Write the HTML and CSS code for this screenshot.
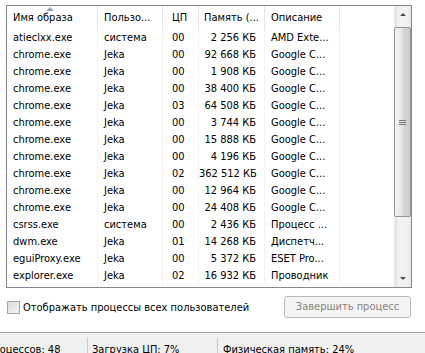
FILE: index.html
```html
<!DOCTYPE html>
<html>
<head>
<meta charset="utf-8">
<link rel="stylesheet" href="styles.css">
</head>
<body>
<div class="page">
  <div class="list">
    <div class="table">
      <div class="head">
        <div class="hcell c1">Имя образа<span class="sort"></span></div>
        <div class="hcell c2">Пользо...</div>
        <div class="hcell c3">ЦП</div>
        <div class="hcell c4">Память (...</div>
        <div class="hcell c5">Описание</div>
        <div class="hcell c6"></div>
      </div>
      <div class="row"><div class="cell c1">atieclxx.exe</div><div class="cell c2">система</div><div class="cell c3">00</div><div class="cell c4">2 256 КБ</div><div class="cell c5">AMD Exte...</div><div class="cell c6"></div></div>
      <div class="row"><div class="cell c1">chrome.exe</div><div class="cell c2">Jeka</div><div class="cell c3">00</div><div class="cell c4">92 668 КБ</div><div class="cell c5">Google C...</div><div class="cell c6"></div></div>
      <div class="row"><div class="cell c1">chrome.exe</div><div class="cell c2">Jeka</div><div class="cell c3">00</div><div class="cell c4">1 908 КБ</div><div class="cell c5">Google C...</div><div class="cell c6"></div></div>
      <div class="row"><div class="cell c1">chrome.exe</div><div class="cell c2">Jeka</div><div class="cell c3">00</div><div class="cell c4">38 400 КБ</div><div class="cell c5">Google C...</div><div class="cell c6"></div></div>
      <div class="row"><div class="cell c1">chrome.exe</div><div class="cell c2">Jeka</div><div class="cell c3">03</div><div class="cell c4">64 508 КБ</div><div class="cell c5">Google C...</div><div class="cell c6"></div></div>
      <div class="row"><div class="cell c1">chrome.exe</div><div class="cell c2">Jeka</div><div class="cell c3">00</div><div class="cell c4">3 744 КБ</div><div class="cell c5">Google C...</div><div class="cell c6"></div></div>
      <div class="row"><div class="cell c1">chrome.exe</div><div class="cell c2">Jeka</div><div class="cell c3">00</div><div class="cell c4">15 888 КБ</div><div class="cell c5">Google C...</div><div class="cell c6"></div></div>
      <div class="row"><div class="cell c1">chrome.exe</div><div class="cell c2">Jeka</div><div class="cell c3">00</div><div class="cell c4">4 196 КБ</div><div class="cell c5">Google C...</div><div class="cell c6"></div></div>
      <div class="row"><div class="cell c1">chrome.exe</div><div class="cell c2">Jeka</div><div class="cell c3">02</div><div class="cell c4">362 512 КБ</div><div class="cell c5">Google C...</div><div class="cell c6"></div></div>
      <div class="row"><div class="cell c1">chrome.exe</div><div class="cell c2">Jeka</div><div class="cell c3">00</div><div class="cell c4">12 964 КБ</div><div class="cell c5">Google C...</div><div class="cell c6"></div></div>
      <div class="row"><div class="cell c1">chrome.exe</div><div class="cell c2">Jeka</div><div class="cell c3">00</div><div class="cell c4">24 408 КБ</div><div class="cell c5">Google C...</div><div class="cell c6"></div></div>
      <div class="row"><div class="cell c1">csrss.exe</div><div class="cell c2">система</div><div class="cell c3">00</div><div class="cell c4">2 436 КБ</div><div class="cell c5">Процесс ...</div><div class="cell c6"></div></div>
      <div class="row"><div class="cell c1">dwm.exe</div><div class="cell c2">Jeka</div><div class="cell c3">01</div><div class="cell c4">14 268 КБ</div><div class="cell c5">Диспетч...</div><div class="cell c6"></div></div>
      <div class="row"><div class="cell c1">eguiProxy.exe</div><div class="cell c2">Jeka</div><div class="cell c3">00</div><div class="cell c4">5 372 КБ</div><div class="cell c5">ESET Pro...</div><div class="cell c6"></div></div>
      <div class="row"><div class="cell c1">explorer.exe</div><div class="cell c2">Jeka</div><div class="cell c3">02</div><div class="cell c4">16 932 КБ</div><div class="cell c5">Проводник</div><div class="cell c6"></div></div>
    </div>
    <div class="scrollbar">
      <div class="sbtn"><span class="arrow-up"></span></div>
      <div class="track">
        <div class="thumb"><span class="grip"></span></div>
      </div>
      <div class="sbtn"><span class="arrow-down"></span></div>
    </div>
  </div>
  <div class="options">
    <label class="check"><span class="box"></span>Отображать процессы всех пользователей</label>
    <div class="button">Завершить процесс</div>
  </div>
</div>
<div class="status">
  <div class="panel p1">Процессов: 48</div>
  <div class="panel p2">Загрузка ЦП: 7%</div>
  <div class="panel p3">Физическая память: 24%</div>
</div>
</body>
</html>
```

FILE: styles.css
```css
html, body {
  margin: 0;
  padding: 0;
}
body {
  width: 425px;
  height: 353px;
  overflow: hidden;
  background: #ffffff;
  font-family: "DejaVu Sans Condensed", "DejaVu Sans", sans-serif;
  font-size: 11px;
  color: #000;
}
.page {
  padding: 5px 0 0 6px;
  height: 327px;
  box-sizing: border-box;
}
.list {
  width: 406px;
  height: 283px;
  box-sizing: border-box;
  border: 1px solid #828790;
  display: flex;
  overflow: hidden;
}
.table {
  flex: 1;
  overflow: hidden;
}
.head, .row {
  display: grid;
  grid-template-columns: 91px 65px 36px 66px 75px 1fr;
}
.head {
  height: 23px;
  line-height: 23px;
  background: #fff;
}
.hcell {
  position: relative;
  border-right: 1px solid #e3e6ea;
  box-sizing: border-box;
  white-space: nowrap;
  overflow: hidden;
}
.hcell.c6 { border-right: none; }
.hcell.c1 { padding-left: 6px; }
.hcell.c2 { padding-left: 6px; }
.hcell.c3 { padding-left: 9px; }
.hcell.c4 { padding-left: 5px; }
.hcell.c5 { padding-left: 6px; }
.sort {
  position: absolute;
  left: 39px;
  top: 1px;
  width: 0;
  height: 0;
  border-left: 4px solid transparent;
  border-right: 4px solid transparent;
  border-bottom: 4px solid #97a5b8;
}
.row {
  height: 17px;
  line-height: 17px;
}
.cell {
  border-right: 1px solid #f2f2f2;
  box-sizing: border-box;
  white-space: nowrap;
  overflow: hidden;
}
.cell.c6 { border-right: none; }
.cell.c1 { padding-left: 6px; }
.cell.c2 { padding-left: 6px; }
.cell.c3 { padding-left: 9px; }
.cell.c4 { text-align: right; padding-right: 8px; }
.cell.c5 { padding-left: 6px; }
.scrollbar {
  width: 17px;
  display: flex;
  flex-direction: column;
  background: linear-gradient(to right, #e3e3e3, #f2f2f2 30%, #f2f2f2 70%, #e8e8e8);
}
.sbtn {
  height: 17px;
  display: flex;
  align-items: center;
  justify-content: center;
}
.arrow-up {
  width: 0; height: 0;
  border-left: 3px solid transparent;
  border-right: 3px solid transparent;
  border-bottom: 3px solid #4d4d4d;
}
.arrow-down {
  width: 0; height: 0;
  border-left: 3px solid transparent;
  border-right: 3px solid transparent;
  border-top: 3px solid #4d4d4d;
}
.track {
  flex: 1;
  padding-top: 4px;
}
.thumb {
  height: 190px;
  box-sizing: border-box;
  border: 1px solid #959595;
  border-radius: 2px;
  background: linear-gradient(to right, #f2f2f2, #e8e8e8 40%, #d6d6d6 60%, #cbcbcb);
  display: flex;
  align-items: center;
  justify-content: center;
}
.grip {
  width: 7px;
  height: 5px;
  background: linear-gradient(to bottom, #7a7a7a 0 1px, transparent 1px 2px, #7a7a7a 2px 3px, transparent 3px 4px, #7a7a7a 4px 5px);
}
.options {
  width: 405px;
  margin-top: 8px;
  height: 22px;
  display: flex;
  align-items: center;
  justify-content: space-between;
}
.check {
  display: flex;
  align-items: center;
  margin-left: 1px;
}
.box {
  width: 13px;
  height: 13px;
  box-sizing: border-box;
  border: 1px solid #a6a6a6;
  background: linear-gradient(135deg, #dcdcdc, #f4f4f4);
  margin-right: 3px;
}
.button {
  width: 127px;
  height: 22px;
  box-sizing: border-box;
  border: 1px solid #b8bcc0;
  border-radius: 3px;
  background: #f4f4f4;
  color: #838383;
  text-align: center;
  line-height: 20px;
}
.status {
  height: 21px;
  box-sizing: border-box;
  border-top: 1px solid #a0a0a0;
  background: #f0f0f0;
  display: flex;
  margin-top: 5px;
  padding-top: 5px;
  overflow: hidden;
}
.panel {
  padding-top: 5px;
  line-height: 13px;
  white-space: nowrap;
  box-sizing: border-box;
  border-right: 1px solid #c8c8c8;
}
.p1 { width: 102px; margin-left: -14px; flex: none; }
.p2 { width: 130px; padding-left: 4px; flex: none; }
.p3 { flex: 1; padding-left: 5px; border-right: none; }
```
